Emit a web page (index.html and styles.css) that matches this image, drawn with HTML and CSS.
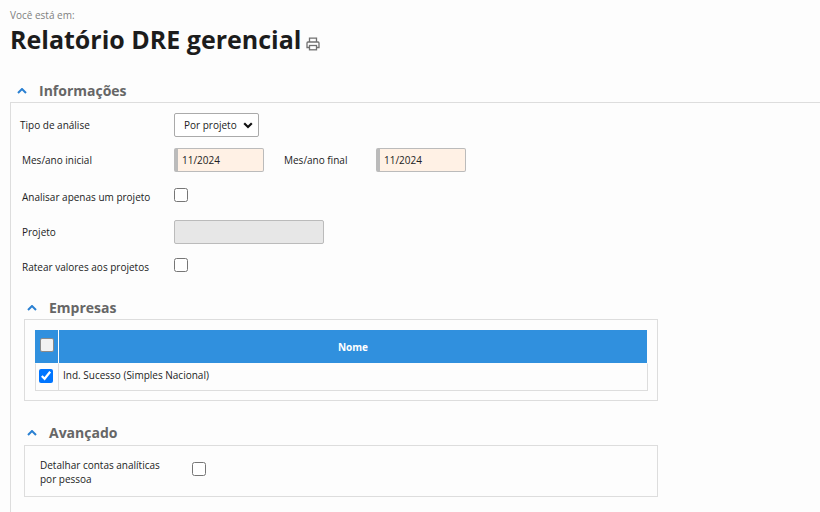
FILE: index.html
```html
<!DOCTYPE html>
<html>
<head>
    <title>Relatório DRE gerencial</title>
    <link rel="stylesheet" href="styles.css">
</head>
<body>
    <p class="crumb">Você está em:</p>
    <div class="title-row">
        <h1>Relatório DRE gerencial</h1>
        <svg class="print" width="14" height="14" viewBox="0 0 14 14" fill="none" stroke="#707070" stroke-width="1.300">
            <path d="M3.500 5V1.200h7V5"/>
            <path d="M3.500 10.500H1V6a1 1 0 0 1 1-1h10a1 1 0 0 1 1 1v4.500h-2.500"/>
            <rect x="3.500" y="8.500" width="7" height="4.300"/>
        </svg>
    </div>

    <div class="head head-main">
        <svg class="chev" width="10" height="6" viewBox="0 0 10 6"><path d="M1 5l4-4 4 4" fill="none" stroke="#2a80d2" stroke-width="2"/></svg>
        <h2>Informações</h2>
    </div>
    <div class="panel">
        <div class="row row-first">
            <label class="lab">Tipo de análise</label>
            <div class="sel-wrap">
                <select class="sel"><option>Por projeto</option></select>
                <svg class="sel-arrow" width="10" height="7" viewBox="0 0 10 7"><path d="M1.200 1.300L5 5l3.800-3.700" fill="none" stroke="#111" stroke-width="2.200"/></svg>
            </div>
        </div>
        <div class="row row-date">
            <label class="lab">Mes/ano inicial</label>
            <input class="date" type="text" value="11/2024">
            <label class="lab-end">Mes/ano final</label>
            <input class="date" type="text" value="11/2024">
        </div>
        <div class="row row-check">
            <label class="lab lab-low">Analisar apenas um projeto</label>
            <input class="check" type="checkbox">
        </div>
        <div class="row row-proj">
            <label class="lab">Projeto</label>
            <input class="proj" type="text" disabled>
        </div>
        <div class="row row-rat">
            <label class="lab lab-low">Ratear valores aos projetos</label>
            <input class="check" type="checkbox">
        </div>

        <div class="head head-sub head-emp">
            <svg class="chev" width="10" height="6" viewBox="0 0 10 6"><path d="M1 5l4-4 4 4" fill="none" stroke="#2a80d2" stroke-width="2"/></svg>
            <h2>Empresas</h2>
        </div>
        <div class="box box-emp">
            <table>
                <tr>
                    <th class="col-check"><input class="check check-head" type="checkbox"></th>
                    <th class="col-name">Nome</th>
                </tr>
                <tr>
                    <td class="col-check"><input class="check" type="checkbox" checked></td>
                    <td class="col-name">Ind. Sucesso (Simples Nacional)</td>
                </tr>
            </table>
        </div>

        <div class="head head-sub head-adv">
            <svg class="chev" width="10" height="6" viewBox="0 0 10 6"><path d="M1 5l4-4 4 4" fill="none" stroke="#2a80d2" stroke-width="2"/></svg>
            <h2>Avançado</h2>
        </div>
        <div class="box box-adv">
            <label class="lab-adv">Detalhar contas analíticas por pessoa</label>
            <input class="check" type="checkbox">
        </div>
    </div>
</body>
</html>
```

FILE: styles.css
```css
html, body {
    height: 512px;
    overflow: hidden;
}
body {
    font-family: "Open Sans", sans-serif;
    font-size: 10px;
    color: #222;
    background-color: #fdfdfd;
    margin: 0;
}
.crumb {
    font-size: 10px;
    line-height: 14px;
    color: #808080;
    margin: 0;
    padding: 8px 0 0 10px;
}
.title-row {
    display: flex;
    align-items: flex-end;
    margin-top: 2px;
    padding-left: 10px;
    height: 31px;
}
h1 {
    font-size: 25px;
    line-height: 31px;
    font-weight: 700;
    color: #1c1c1c;
    margin: 0;
}
.print {
    margin: 0 0 4px 5px;
}
.head {
    display: flex;
    align-items: center;
    height: 18px;
}
.head-main {
    margin-top: 27px;
    padding-left: 17px;
}
.head h2 {
    font-size: 14px;
    line-height: 18px;
    font-weight: 700;
    color: #666;
    margin: 0 0 0 12px;
}
.panel {
    border-top: 1px solid #ddd;
    border-left: 1px solid #ddd;
    margin: 2px 0 0 10px;
    height: 420px;
}
.row {
    display: flex;
    align-items: center;
    padding-left: 11px;
}
.lab {
    width: 152px;
    flex-shrink: 0;
}
.lab-low {
    padding-top: 4px;
}
.row-first {
    padding-left: 9px;
    padding-top: 10px;
}
.row-first .lab {
    width: 154px;
}
.sel-wrap {
    position: relative;
    width: 85px;
    height: 24px;
}
.sel {
    appearance: none;
    display: block;
    box-sizing: border-box;
    width: 85px;
    height: 24px;
    font-family: inherit;
    font-size: 10px;
    color: #222;
    background-color: #fff;
    border: 1px solid #aaa;
    border-radius: 2px;
    padding-left: 9px;
}
.sel-arrow {
    position: absolute;
    right: 6px;
    top: 9px;
}
.row-date {
    margin-top: 11px;
}
.date {
    width: 90px;
    height: 24px;
    box-sizing: border-box;
    font-family: inherit;
    font-size: 10px;
    color: #222;
    background-color: #fff1e5;
    border: 1px solid #bbb;
    border-left: 4px solid #bbb;
    border-radius: 2px;
    padding: 0 0 0 4px;
}
.lab-end {
    width: 112px;
    padding-left: 20px;
    box-sizing: border-box;
    flex-shrink: 0;
}
.check {
    width: 14px;
    height: 14px;
    margin: 0;
}
.row-check {
    margin-top: 14px;
}
.row-proj {
    margin-top: 16px;
}
.proj {
    width: 150px;
    height: 24px;
    box-sizing: border-box;
    background-color: #e7e7e7;
    border: 1px solid #bbb;
    border-radius: 2px;
}
.row-rat {
    margin-top: 12px;
}
.head-sub {
    padding-left: 16px;
}
.head-emp {
    margin-top: 25px;
}
.head-adv {
    margin-top: 23px;
}
.box {
    box-sizing: border-box;
    border: 1px solid #ddd;
    margin: 2px 0 0 13px;
    width: 634px;
}
.box-emp {
    padding: 10px 10px 9px;
}
table {
    border-collapse: separate;
    border-spacing: 0;
    width: 613px;
}
th {
    height: 33px;
    padding: 1px 0 0;
    box-sizing: border-box;
    font-size: 10px;
    font-weight: 700;
    color: #fff;
    background-color: #3090de;
}
th.col-check {
    border-right: 1px solid #fff;
}
th.col-name {
    border-right: 1px solid #fdfdfd;
}
td {
    height: 28px;
    padding: 0;
    box-sizing: border-box;
    border-top: 1px solid #fdfdfd;
    border-bottom: 1px solid #ddd;
    border-right: 1px solid #ddd;
}
td.col-check {
    border-left: 1px solid #ddd;
    padding-bottom: 3px;
}
td.col-name {
    padding: 0 0 4px 4px;
}
.col-check {
    width: 24px;
    text-align: center;
}
.col-check .check {
    display: block;
    margin-left: 3px;
}
th.col-check .check-head {
    appearance: none;
    box-sizing: border-box;
    background-color: #f2f2f2;
    border: 1px solid #8a8a8a;
    border-radius: 2px;
    margin: -4px 0 0 5px;
}
.box-adv {
    display: flex;
    align-items: center;
    height: 52px;
    padding-left: 15px;
}
.lab-adv {
    width: 125px;
    margin-right: 27px;
    line-height: 14px;
    padding-top: 2px;
    flex-shrink: 0;
}
.box-adv .check {
    margin-bottom: 5px;
}
.head-adv + .box {
    margin-top: 3px;
}
```
